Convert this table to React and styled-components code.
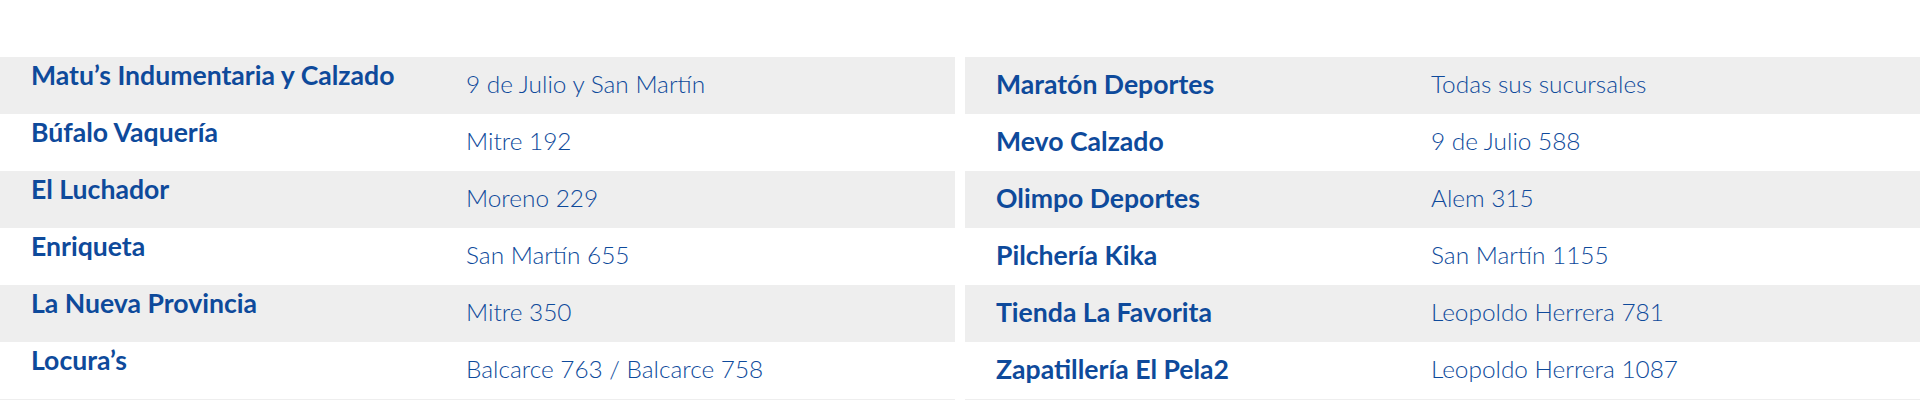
import * as React from 'react';
import styled, {createGlobalStyle} from 'styled-components';

const GlobalStyle = createGlobalStyle`
  html, body {
    margin: 0;
    padding: 0;
    background: #ffffff;
  }
`;

const Page = styled.div`
  padding-top: 57px;
  display: flex;
  gap: 10px;
  font-family: Lato, "Open Sans", sans-serif;
  color: #0e4a9b;
`;

const Table = styled.div`
  flex: ${props => props.wide ? '0 0 955px' : '1 1 auto'};
  display: flex;
  flex-direction: column;
`;

const Row = styled.div`
  box-sizing: border-box;
  height: 57px;
  display: grid;
  grid-template-columns: 435px 1fr;
  align-items: center;
  padding: 0 0 3px 31px;
  background-color: ${props => props.striped ? '#eeeeee' : '#ffffff'};
`;

const Name = styled.strong`
  font-weight: 700;
  font-size: 26.6px;
  line-height: 30px;
  white-space: nowrap;
  align-self: ${props => props.raised ? 'start' : 'center'};
  padding-top: ${props => props.raised ? '3px' : '0'};
`;

const Address = styled.span`
  font-weight: 300;
  font-size: 24.4px;
  line-height: 30px;
  white-space: nowrap;
`;

const left = [
  ['Matu’s Indumentaria y Calzado', '9 de Julio y San Martín'],
  ['Búfalo Vaquería', 'Mitre 192'],
  ['El Luchador', 'Moreno 229'],
  ['Enriqueta', 'San Martín 655'],
  ['La Nueva Provincia', 'Mitre 350'],
  ['Locura’s', 'Balcarce 763 / Balcarce 758'],
];

const right = [
  ['Maratón Deportes', 'Todas sus sucursales'],
  ['Mevo Calzado', '9 de Julio 588'],
  ['Olimpo Deportes', 'Alem 315'],
  ['Pilchería Kika', 'San Martín 1155'],
  ['Tienda La Favorita', 'Leopoldo Herrera 781'],
  ['Zapatillería El Pela2', 'Leopoldo Herrera 1087'],
];

const StoreTable = ({stores, wide, raised}) => (
  <Table wide={wide}>
    {stores.map(([name, address], i) => (
      <Row key={name} striped={i % 2 === 0}>
        <Name raised={raised}>{name}</Name>
        <Address>{address}</Address>
      </Row>
    ))}
    <Row striped />
  </Table>
);

const App = () => (
  <>
    <GlobalStyle/>
    <Page>
      <StoreTable stores={left} wide raised/>
      <StoreTable stores={right}/>
    </Page>
  </>
);

export default App;
